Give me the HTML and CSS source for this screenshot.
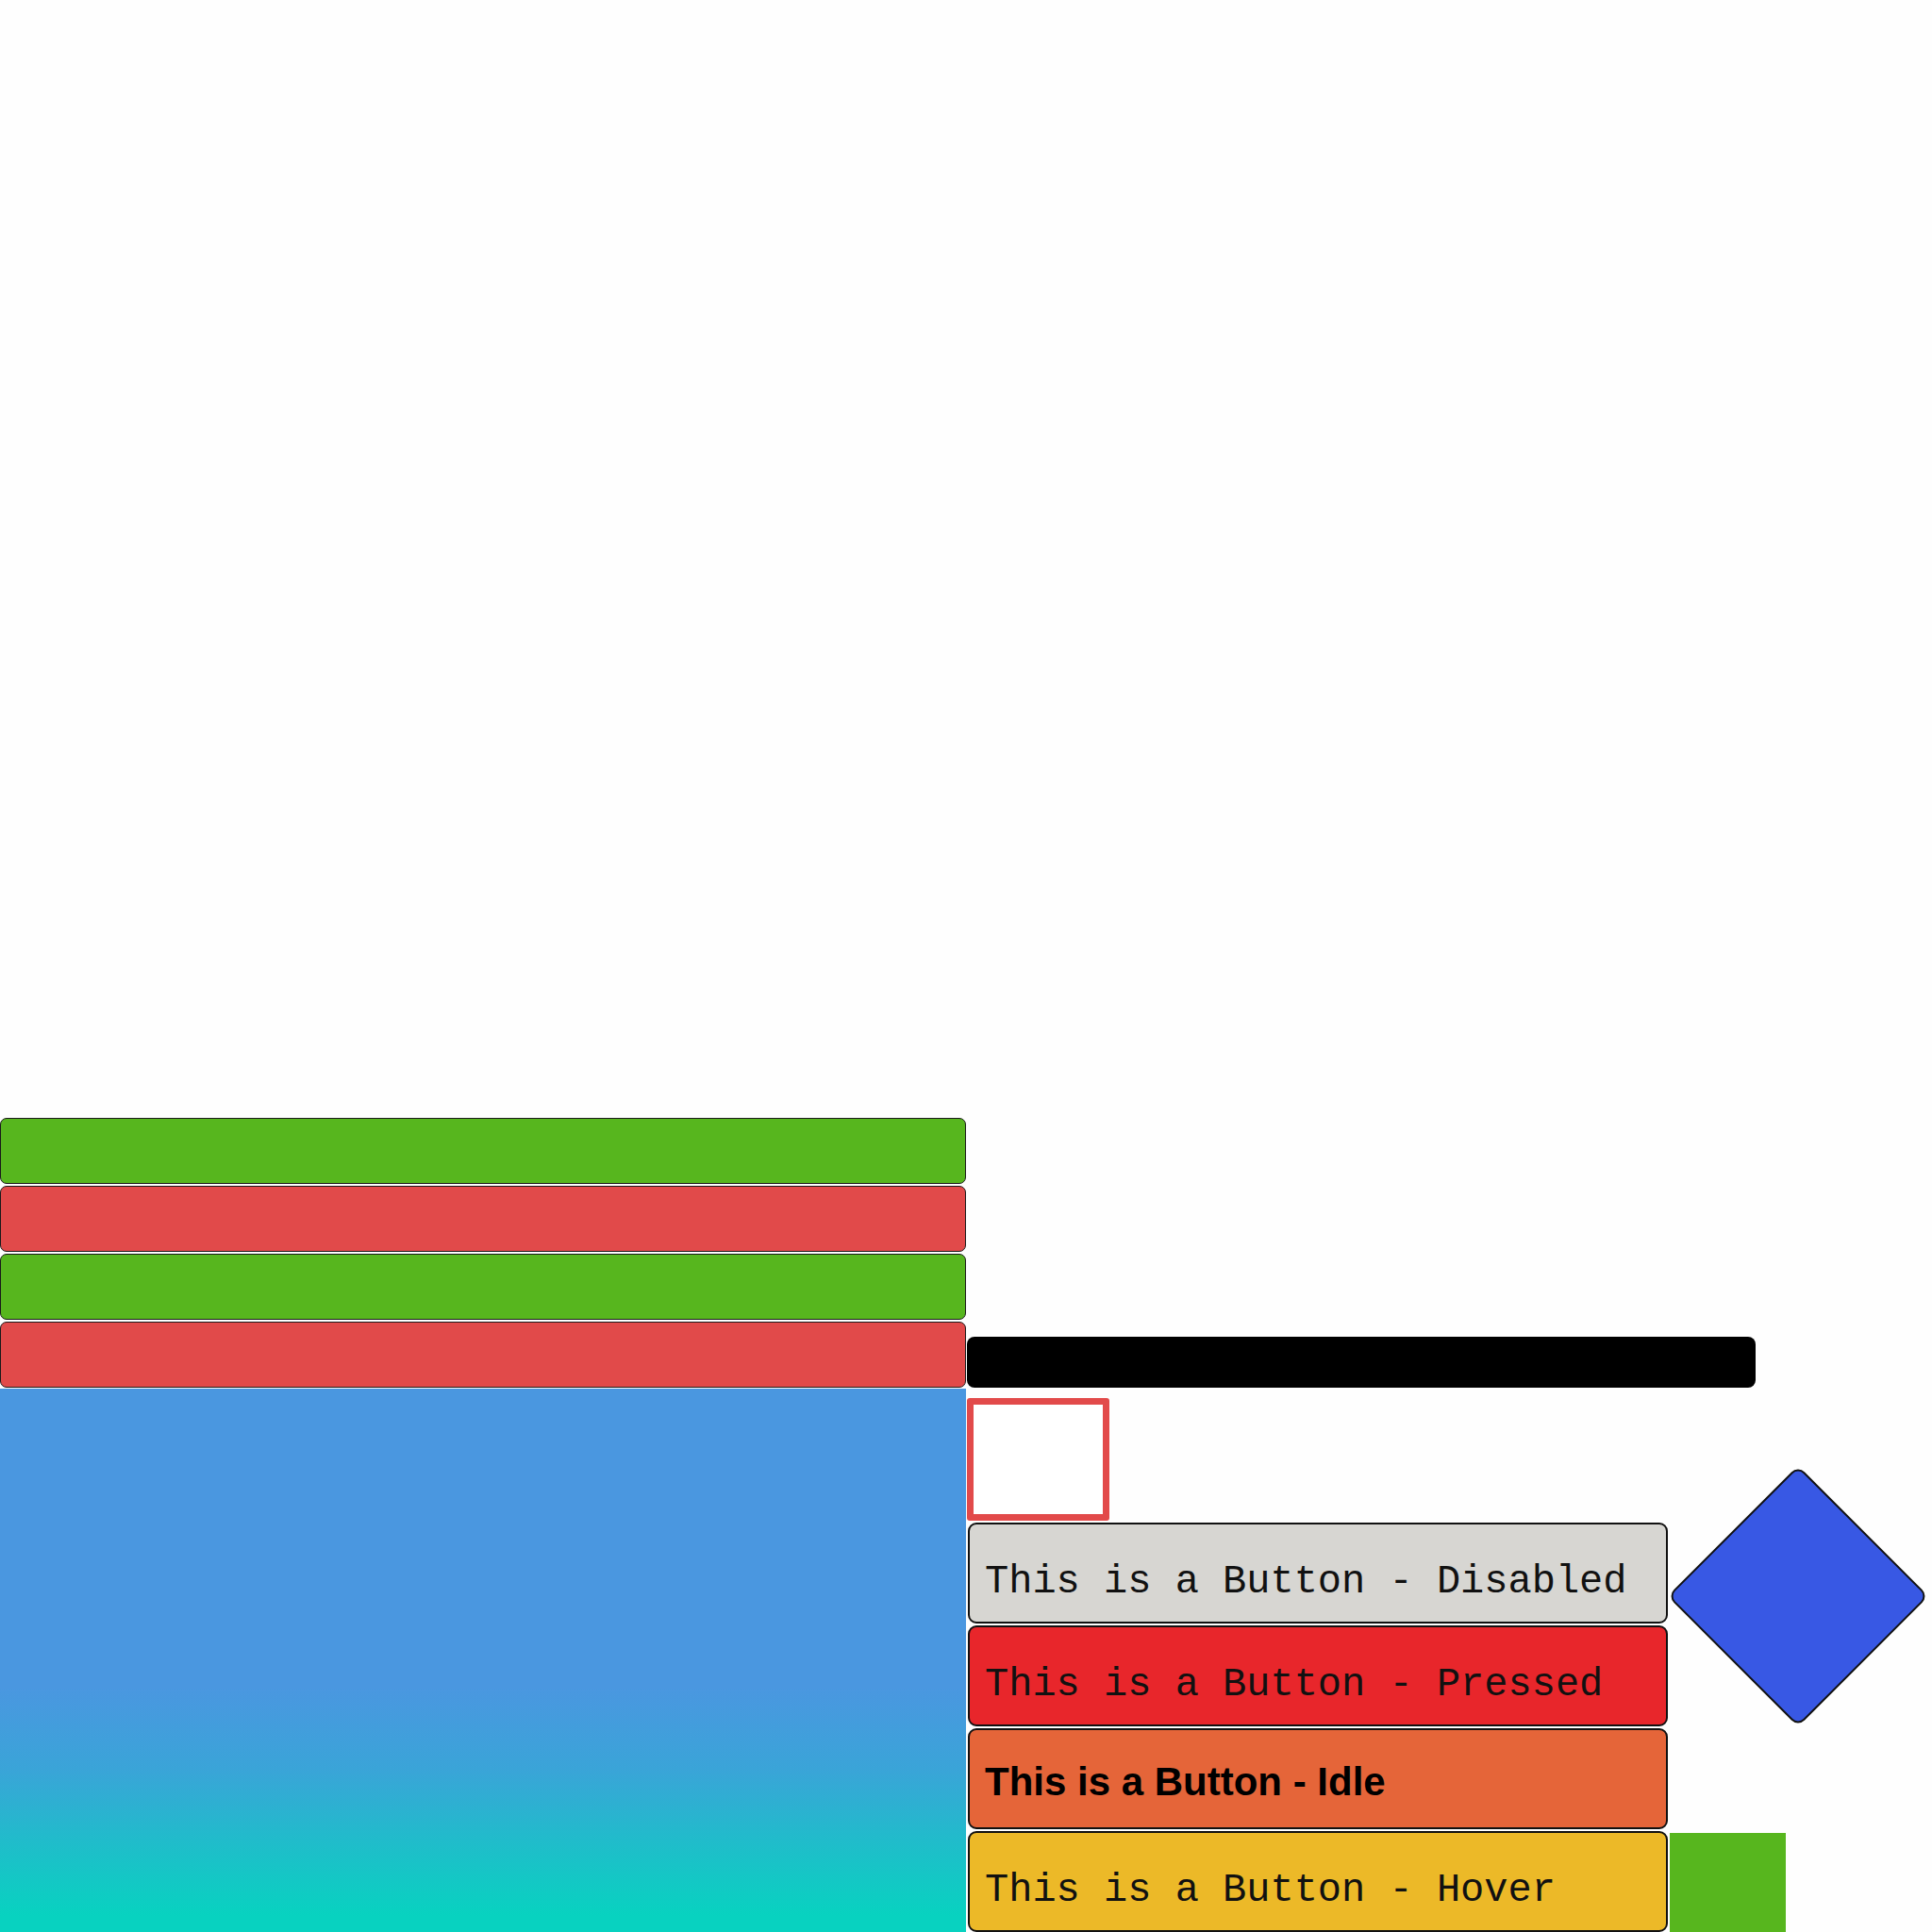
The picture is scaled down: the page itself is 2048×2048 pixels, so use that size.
FILE: index.html
```html
<!DOCTYPE html>
<html lang="en">
<head>
  <meta charset="UTF-8">
  <title>Button States</title>
  <link rel="stylesheet" href="styles.css">
</head>
<body>
  <div class="stage">
    <div class="left">
      <div class="bar green"></div>
      <div class="bar red"></div>
      <div class="bar green"></div>
      <div class="bar red last"></div>
      <div class="gradient"></div>
    </div>

    <div class="right">
      <div class="progress"></div>
      <div class="outline"></div>
      <div class="row">
        <div class="buttons">
          <button class="btn disabled">This is a Button - Disabled</button>
          <button class="btn pressed">This is a Button - Pressed</button>
          <button class="btn idle">This is a Button - Idle</button>
          <button class="btn hover">This is a Button - Hover</button>
        </div>
        <div class="side">
          <div class="diamond"></div>
          <div class="swatch"></div>
        </div>
      </div>
    </div>
  </div>
</body>
</html>
```

FILE: styles.css
```css
html, body {
  margin: 0;
  padding: 0;
  background: #fefefe;
}
.stage {
  width: 2048px;
  height: 2048px;
  display: flex;
  align-items: flex-end;
  overflow: hidden;
}
.left {
  width: 1024px;
  display: flex;
  flex-direction: column;
}
.bar {
  height: 70px;
  margin-bottom: 2px;
  border: 1px solid #1a1a1a;
  border-radius: 7px;
  box-sizing: border-box;
}
.bar.last {
  margin-bottom: 1px;
}
.green {
  background: #57b61e;
}
.red {
  background: #e14a4a;
}
.gradient {
  height: 576px;
  background: linear-gradient(to bottom, #4a97e0 0%, #4a97e0 55%, #3aa4d8 70%, #1dbfc9 85%, #08d2c0 97%);
}
.right {
  margin-left: 1px;
  display: flex;
  flex-direction: column;
}
.progress {
  width: 836px;
  height: 54px;
  background: #000;
  border-radius: 8px;
  margin-bottom: 11px;
}
.outline {
  width: 151px;
  height: 130px;
  box-sizing: border-box;
  border: 7px solid #e24a4a;
  border-radius: 3px;
  background: #fff;
  margin-bottom: 2px;
}
.row {
  display: flex;
  height: 434px;
}
.buttons {
  display: flex;
  flex-direction: column;
  gap: 2px;
  margin-left: 1px;
}
.btn {
  width: 742px;
  height: 107px;
  box-sizing: border-box;
  border: 2px solid #111;
  border-radius: 9px;
  padding: 18px 0 0 16px;
  margin: 0;
  display: flex;
  align-items: center;
  text-align: left;
  font-family: "Courier New", "Nimbus Mono PS", FreeMono, Courier, "Liberation Mono", monospace;
  font-size: 42px;
  color: #111;
}
.disabled {
  background: #d7d6d2;
}
.pressed {
  background: #e8262b;
}
.idle {
  background: #e56539;
  font-family: "Liberation Sans", Arial, sans-serif;
  font-weight: bold;
  color: #000;
  padding-top: 6px;
}
.hover {
  background: #ecb928;
}
.side {
  margin-left: 2px;
  display: flex;
  flex-direction: column;
  justify-content: space-between;
  width: 278px;
}
.diamond {
  width: 196px;
  height: 196px;
  box-sizing: border-box;
  margin: -20px 0 0 38px;
  background: #3858e4;
  border: 2px solid #111;
  border-radius: 10px;
  transform: rotate(45deg);
}
.swatch {
  width: 123px;
  height: 105px;
  background: #57b61e;
}
```
